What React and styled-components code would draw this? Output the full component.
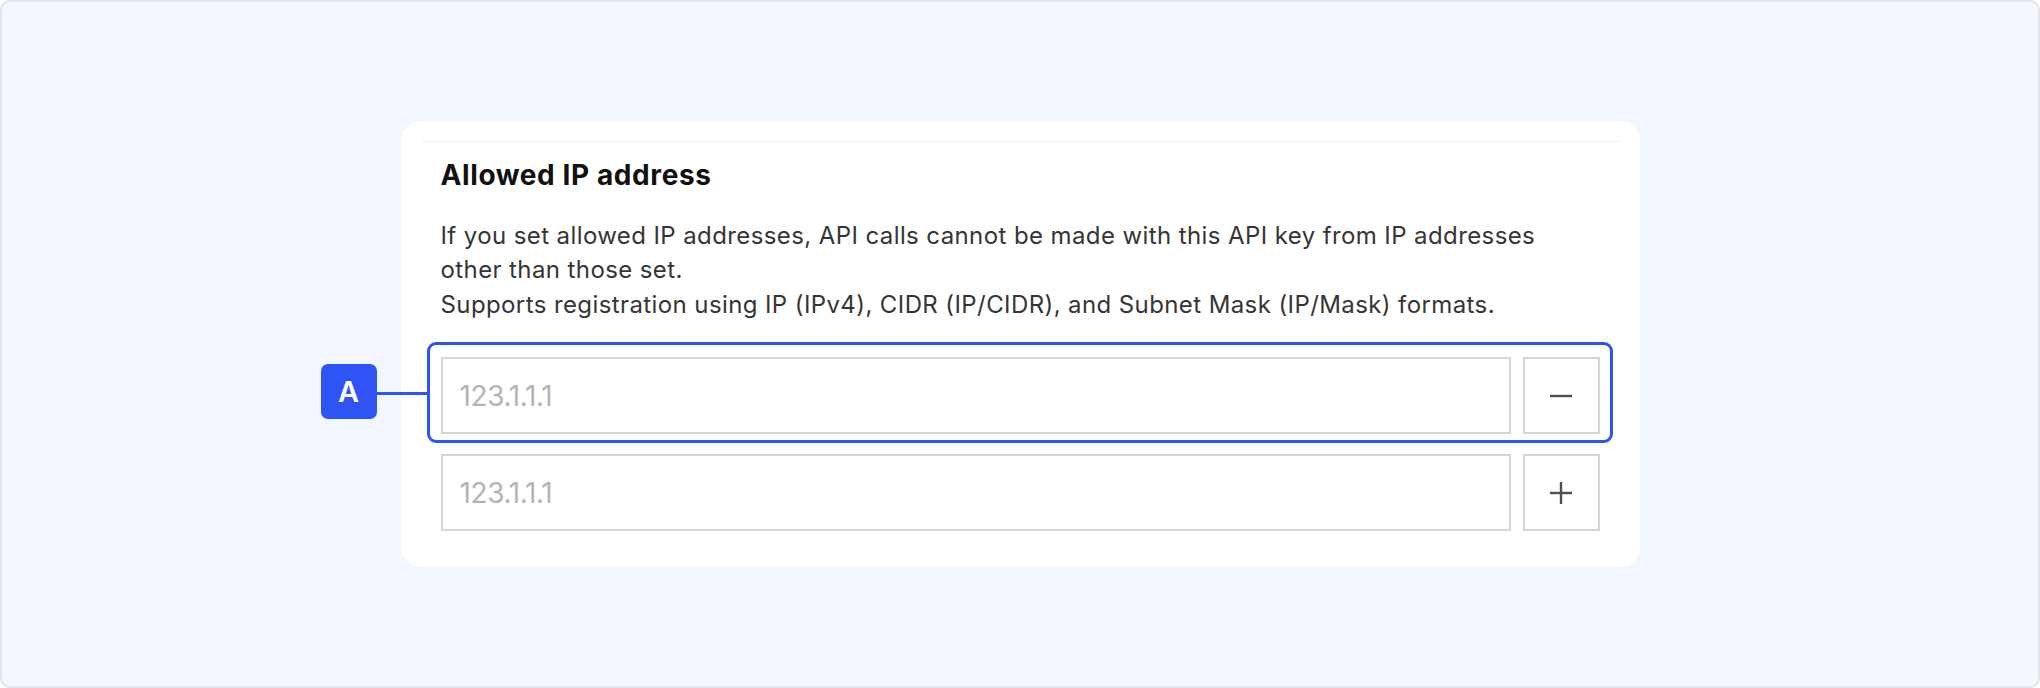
import styled, { createGlobalStyle } from "styled-components";

const GlobalStyle = createGlobalStyle`
    * {
        box-sizing: border-box;
    }
    body {
        margin: 0;
        background: #ffffff;
        font-family: Inter, "Noto Sans", sans-serif;
    }
`;

const Frame = styled.div`
    width: 2040px;
    height: 688px;
    display: flex;
    align-items: center;
    justify-content: center;
    background: #f2f6ff;
    border: 2px solid #e3e4e8;
    border-radius: 10px;
`;

const Card = styled.section`
    width: 1239px;
    padding: 20px 20px 36px;
    background: #ffffff;
    border-radius: 20px;
`;

const Divider = styled.div`
    height: 1px;
    background: #eef0f5;
`;

const Body = styled.div`
    padding: 0 20px;
`;

const Title = styled.h2`
    margin: 16px 0 0;
    font-size: 28px;
    line-height: 34px;
    font-weight: 700;
    letter-spacing: 0.6px;
    color: #111111;
`;

const Description = styled.p`
    max-width: 1120px;
    margin: 27px 0 0;
    font-size: 24px;
    line-height: 34.5px;
    letter-spacing: 0.4px;
    color: #353535;
`;

const Rows = styled.div`
    display: flex;
    flex-direction: column;
    gap: 20px;
    margin-top: 35px;
`;

const Row = styled.div`
    position: relative;
    display: flex;
    gap: 12px;
    height: 77px;
`;

const AddressInput = styled.input`
    flex: 1;
    min-width: 0;
    height: 100%;
    padding: 0 17px;
    border: 2px solid #d4d4d4;
    border-radius: 0;
    outline: none;
    font-family: Inter, "Noto Sans", sans-serif;
    font-size: 28px;
    letter-spacing: -0.4px;
    color: #333333;

    &::placeholder {
        color: #b4b4b4;
    }
`;

const IconButton = styled.button`
    width: 77px;
    height: 100%;
    display: flex;
    align-items: center;
    justify-content: center;
    padding: 0;
    background: #ffffff;
    border: 2px solid #d4d4d4;
    cursor: pointer;
`;

const Highlight = styled.div`
    position: absolute;
    top: -15px;
    left: -14px;
    right: -13px;
    bottom: -9px;
    border: 3px solid #2f54f6;
    border-radius: 9px;
    pointer-events: none;
`;

const Badge = styled.div`
    position: absolute;
    left: -120px;
    top: 7px;
    width: 56px;
    height: 55px;
    display: flex;
    align-items: center;
    justify-content: center;
    background: #2f54f6;
    border-radius: 7px;
    color: #ffffff;
    font-size: 29px;
    font-weight: 600;
`;

const Connector = styled.div`
    position: absolute;
    left: -64px;
    top: 35px;
    width: 50px;
    height: 3px;
    background: #2f54f6;
`;

function SignIcon({ plus }) {
    return (
        <svg width="22" height="22" viewBox="0 0 22 22">
            <line x1="0" y1="11" x2="22" y2="11" stroke="#4f4f4f" strokeWidth="2.4" />
            {plus && <line x1="11" y1="0" x2="11" y2="22" stroke="#4f4f4f" strokeWidth="2.4" />}
        </svg>
    );
}

function AddressRow({ plus, marker }) {
    return (
        <Row>
            <AddressInput placeholder="123.1.1.1" />
            <IconButton aria-label={plus ? "Add" : "Remove"}>
                <SignIcon plus={plus} />
            </IconButton>
            {marker && (
                <>
                    <Highlight />
                    <Connector />
                    <Badge>{marker}</Badge>
                </>
            )}
        </Row>
    );
}

export default function App() {
    return (
        <>
            <GlobalStyle />
            <Frame>
                <Card>
                    <Divider />
                    <Body>
                        <Title>Allowed IP address</Title>
                        <Description>
                            If you set allowed IP addresses, API calls cannot be made with this API key from IP addresses other than those set.
                            <br />
                            Supports registration using IP (IPv4), CIDR (IP/CIDR), and Subnet Mask (IP/Mask) formats.
                        </Description>
                        <Rows>
                            <AddressRow marker="A" />
                            <AddressRow plus />
                        </Rows>
                    </Body>
                </Card>
            </Frame>
        </>
    );
}
